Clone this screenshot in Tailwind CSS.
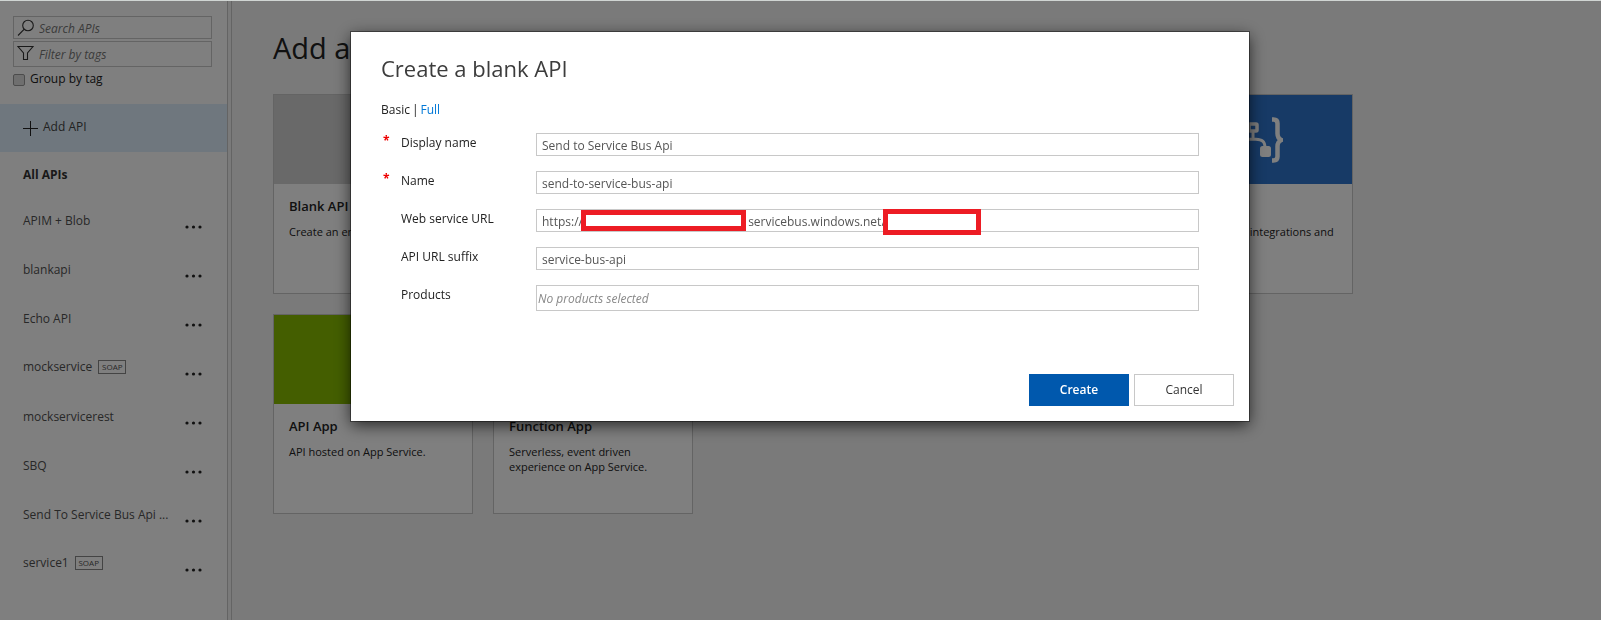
<!DOCTYPE html>
<html lang="en">
<head>
<meta charset="utf-8">
<meta name="viewport" content="width=device-width, initial-scale=1">
<title>Create a blank API</title>
<script src="https://cdn.jsdelivr.net/npm/@tailwindcss/browser@4"></script>
</head>
<body class="min-h-screen bg-[#f5f5f5] font-['Open_Sans','Noto_Sans',sans-serif] text-xs text-[#222]">

<div class="flex min-h-screen border-t border-[#d0d5d3]">
  <aside class="flex w-[228px] shrink-0 flex-col border-r border-[#c8c8c8] bg-white">
    <div class="px-[13px] pt-[15px]">
      <div class="flex h-[23px] w-[199px] items-center border border-[#c8c8c8]">
        <svg class="ml-[3px] size-[18px] shrink-0" viewBox="0 0 18 18" fill="none" stroke="#333" stroke-width="1.1" aria-hidden="true"><circle cx="11" cy="6.500" r="5.300"/><path d="M7.300 10.200 1 16.500"/></svg>
        <input type="text" aria-label="Search APIs" placeholder="Search APIs" class="ml-1 w-full min-w-0 pt-[3px] italic outline-none placeholder:text-[#777]">
      </div>
      <div class="mt-[2px] flex h-[26px] w-[199px] items-center border border-[#c8c8c8]">
        <svg class="ml-[3px] size-[18px] shrink-0" viewBox="0 0 18 18" fill="none" stroke="#333" stroke-width="1.1" aria-hidden="true"><path d="M1 1.500h15l-5.500 6.500v6.500h-4V8z"/></svg>
        <input type="text" aria-label="Filter by tags" placeholder="Filter by tags" class="ml-1 w-full min-w-0 pt-[2px] italic outline-none placeholder:text-[#777]">
      </div>
      <label class="mt-[2px] flex h-5 items-center gap-[5px]">
        <input type="checkbox" class="mt-px size-3 appearance-none rounded-xs border border-[#999] bg-[#dedede]">
        Group by tag
      </label>
    </div>
    <button type="button" class="mt-[15px] flex h-12 items-center gap-[5px] bg-[#dfeffc] pl-[23px] text-[#444]">
      <svg class="size-[15px]" viewBox="0 0 15 15" stroke="#222" stroke-width="1" aria-hidden="true"><path d="M7.500 0v15M0 7.500h15"/></svg>
      <span class="pb-[2px]">Add API</span>
    </button>
    <a href="#" class="flex h-[46px] items-center pl-[23px] font-bold text-[#333]">All APIs</a>
    <ul class="text-[#505050]">
      <li class="flex h-[49px] items-center pl-[23px]"><a href="#" class="w-[162px] pb-[3px]">APIM + Blob</a><button type="button" aria-label="More options" class="mt-2"><svg class="h-1 w-[17px]" viewBox="0 0 17 4" fill="#222"><circle cx="2" cy="2" r="1.600"/><circle cx="8.500" cy="2" r="1.600"/><circle cx="15" cy="2" r="1.600"/></svg></button></li>
      <li class="flex h-[49px] items-center pl-[23px]"><a href="#" class="w-[162px] pb-[3px]">blankapi</a><button type="button" aria-label="More options" class="mt-2"><svg class="h-1 w-[17px]" viewBox="0 0 17 4" fill="#222"><circle cx="2" cy="2" r="1.600"/><circle cx="8.500" cy="2" r="1.600"/><circle cx="15" cy="2" r="1.600"/></svg></button></li>
      <li class="flex h-[49px] items-center pl-[23px]"><a href="#" class="w-[162px] pb-[3px]">Echo API</a><button type="button" aria-label="More options" class="mt-2"><svg class="h-1 w-[17px]" viewBox="0 0 17 4" fill="#222"><circle cx="2" cy="2" r="1.600"/><circle cx="8.500" cy="2" r="1.600"/><circle cx="15" cy="2" r="1.600"/></svg></button></li>
      <li class="flex h-[49px] items-center pl-[23px]"><a href="#" class="flex w-[162px] items-center gap-[6px] pb-[5px]">mockservice <span class="flex h-[14px] w-7 items-center justify-center border border-[#888] text-[8px]">SOAP</span></a><button type="button" aria-label="More options" class="mt-2"><svg class="h-1 w-[17px]" viewBox="0 0 17 4" fill="#222"><circle cx="2" cy="2" r="1.600"/><circle cx="8.500" cy="2" r="1.600"/><circle cx="15" cy="2" r="1.600"/></svg></button></li>
      <li class="flex h-[49px] items-center pl-[23px]"><a href="#" class="w-[162px] pb-[3px]">mockservicerest</a><button type="button" aria-label="More options" class="mt-2"><svg class="h-1 w-[17px]" viewBox="0 0 17 4" fill="#222"><circle cx="2" cy="2" r="1.600"/><circle cx="8.500" cy="2" r="1.600"/><circle cx="15" cy="2" r="1.600"/></svg></button></li>
      <li class="flex h-[49px] items-center pl-[23px]"><a href="#" class="w-[162px] pb-[3px]">SBQ</a><button type="button" aria-label="More options" class="mt-2"><svg class="h-1 w-[17px]" viewBox="0 0 17 4" fill="#222"><circle cx="2" cy="2" r="1.600"/><circle cx="8.500" cy="2" r="1.600"/><circle cx="15" cy="2" r="1.600"/></svg></button></li>
      <li class="flex h-[49px] items-center pl-[23px]"><a href="#" class="w-[162px] pb-[3px] whitespace-nowrap">Send To Service Bus Api ...</a><button type="button" aria-label="More options" class="mt-2"><svg class="h-1 w-[17px]" viewBox="0 0 17 4" fill="#222"><circle cx="2" cy="2" r="1.600"/><circle cx="8.500" cy="2" r="1.600"/><circle cx="15" cy="2" r="1.600"/></svg></button></li>
      <li class="flex h-[49px] items-center pl-[23px]"><a href="#" class="flex w-[162px] items-center gap-[6px] pb-[5px]">service1 <span class="flex h-[14px] w-7 items-center justify-center border border-[#888] text-[8px]">SOAP</span></a><button type="button" aria-label="More options" class="mt-2"><svg class="h-1 w-[17px]" viewBox="0 0 17 4" fill="#222"><circle cx="2" cy="2" r="1.600"/><circle cx="8.500" cy="2" r="1.600"/><circle cx="15" cy="2" r="1.600"/></svg></button></li>
    </ul>
  </aside>

  <main class="ml-[3px] flex-1 border-l border-[#c8c8c8] pt-[27px] pl-[41px]">
    <h1 class="text-[29px] leading-10">Add a</h1>
    <div class="mt-[26px] grid grid-cols-[repeat(5,200px)] gap-5 text-[11px] leading-[15px]">
      <a href="#" class="h-[200px] border border-[#c8c8c8] bg-white">
        <div class="h-[89px] bg-[#d2d2d2]"></div>
        <div class="px-[15px] pt-3"><h2 class="text-[13px] leading-5 font-semibold">Blank API</h2><p class="mt-2">Create an empty API</p></div>
      </a>
      <a href="#" class="col-start-5 h-[200px] border border-[#c8c8c8] bg-white">
        <div class="flex h-[89px] items-center justify-center bg-[#2e74cc]">
          <svg class="h-[46px] w-[60px]" viewBox="0 0 60 46" fill="none" stroke="#fff" stroke-width="4.500" aria-hidden="true">
            <path d="M49 2.500h1.500q4 0 4 4v10q0 5 4 6.500q-4 1.500-4 6.500v10q0 4-4 4H49M11 2.500H9.500q-4 0-4 4v10q0 5-4 6.500q4 1.500 4 6.500v10q0 4 4 4H11"/>
            <rect x="26" y="7" width="8" height="7" rx="1" stroke-width="3.500"/>
            <path d="M30 15v8M30 22c7 1 12 0 12 9M30 22c-7 1-12 0-12 9" stroke-width="3"/>
            <rect x="37" y="29" width="11" height="11" rx="2.500" fill="#fff" stroke="none"/><rect x="12" y="29" width="11" height="11" rx="2.500" fill="#fff" stroke="none"/>
          </svg>
        </div>
        <div class="px-[15px] pt-3"><h2 class="text-[13px] leading-5 font-semibold">Logic App</h2><p class="mt-2">Scalable hybrid integrations and workflows</p></div>
      </a>
      <a href="#" class="col-start-1 h-[200px] border border-[#c8c8c8] bg-white">
        <div class="h-[89px] bg-[#88bd00]"></div>
        <div class="px-[15px] pt-3"><h2 class="text-[13px] leading-5 font-semibold">API App</h2><p class="mt-2">API hosted on App Service.</p></div>
      </a>
      <a href="#" class="h-[200px] border border-[#c8c8c8] bg-white">
        <div class="h-[89px] bg-[#f0a030]"></div>
        <div class="px-[15px] pt-3"><h2 class="text-[13px] leading-5 font-semibold">Function App</h2><p class="mt-2">Serverless, event driven experience on App Service.</p></div>
      </a>
    </div>
  </main>
</div>

<div class="fixed inset-x-0 top-px bottom-0 flex items-start justify-center bg-black/50 pt-[31px] pr-px">
  <form role="dialog" aria-labelledby="dialog-title" class="w-full max-w-[898px] bg-white pt-[18px] pr-[15px] pb-[15px] pl-[30px] shadow-[0_0_0_1px_rgba(0,0,0,0.4),0_4px_15px_rgba(0,0,0,0.7)]">
    <h2 id="dialog-title" class="text-[22px] leading-9 text-[#3c3c3c]">Create a blank API</h2>
    <p class="mt-[14px] flex h-5 gap-[2px] leading-5"><span>Basic</span><span>|</span><a href="#" class="text-[#0078d7]">Full</a></p>
    <div class="mt-[13px] mr-[35px] grid grid-cols-[20px_135px_1fr] gap-y-[15px]">
      <span class="pl-[2px] font-bold text-[#e00]">*</span>
      <label for="display" class="pt-[2px]">Display name</label>
      <input id="display" type="text" value="Send to Service Bus Api" class="h-[23px] border border-[#c8c8c8] px-[5px] pt-[2px] text-[#555] outline-none">

      <span class="pl-[2px] font-bold text-[#e00]">*</span>
      <label for="name" class="pt-[2px]">Name</label>
      <input id="name" type="text" value="send-to-service-bus-api" class="h-[23px] border border-[#c8c8c8] px-[5px] pt-[2px] text-[#555] outline-none">

      <label for="url" class="col-start-2 pt-[2px]">Web service URL</label>
      <div class="relative h-[23px]">
        <input id="url" type="text" value="https://&nbsp;&nbsp;&nbsp;&nbsp;&nbsp;&nbsp;&nbsp;&nbsp;&nbsp;&nbsp;&nbsp;&nbsp;&nbsp;&nbsp;&nbsp;&nbsp;&nbsp;&nbsp;&nbsp;&nbsp;&nbsp;&nbsp;&nbsp;&nbsp;&nbsp;&nbsp;&nbsp;&nbsp;&nbsp;&nbsp;&nbsp;&nbsp;&nbsp;&nbsp;&nbsp;&nbsp;&nbsp;&nbsp;&nbsp;&nbsp;&nbsp;&nbsp;&nbsp;&nbsp;&nbsp;&nbsp;&nbsp;&nbsp;&nbsp;&nbsp;&nbsp;&nbsp;&nbsp;servicebus.windows.net/" class="h-full w-full border border-[#c8c8c8] px-[5px] pt-[2px] text-[#555] outline-none">
        <span class="absolute top-px left-[45px] h-[21px] w-[165px] border-5 border-[#ed1c24] bg-white"></span>
        <span class="absolute top-0 left-[347px] h-[26px] w-[98px] border-5 border-[#ed1c24] bg-white"></span>
      </div>

      <label for="suffix" class="col-start-2 pt-[2px]">API URL suffix</label>
      <input id="suffix" type="text" value="service-bus-api" class="h-[23px] border border-[#c8c8c8] px-[5px] pt-[2px] text-[#555] outline-none">

      <label for="products" class="col-start-2 pt-[2px]">Products</label>
      <input id="products" type="text" placeholder="No products selected" class="h-[26px] border border-[#c8c8c8] px-px pt-px italic outline-none placeholder:text-[#888]">
    </div>
    <div class="mt-[63px] flex justify-end gap-[5px]">
      <button type="submit" class="h-8 w-[100px] bg-[#0058ad] font-semibold text-white">Create</button>
      <button type="button" class="h-8 w-[100px] border border-[#c8c8c8] bg-white text-[#333]">Cancel</button>
    </div>
  </form>
</div>
</body>
</html>
